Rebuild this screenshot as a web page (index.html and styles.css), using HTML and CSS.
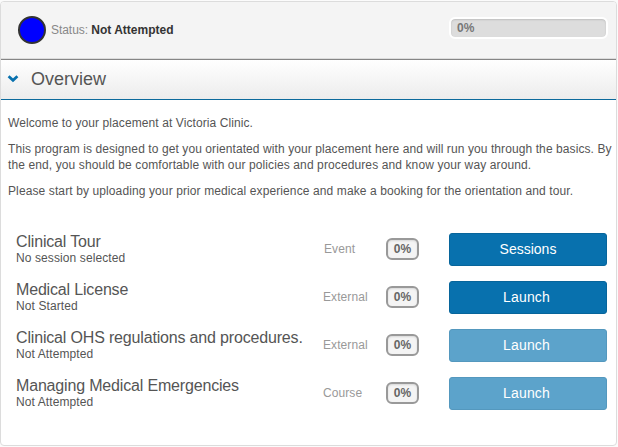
FILE: index.html
```html
<!DOCTYPE html>
<html lang="en">
<head>
<meta charset="utf-8">
<title>Overview</title>
<link rel="stylesheet" href="styles.css">
</head>
<body>
<main class="card">
  <header class="status-bar">
    <span class="status-dot"></span>
    <p class="status"><span class="status-label">Status: </span><strong>Not Attempted</strong></p>
    <div class="progress">0%</div>
  </header>
  <div class="section-head">
    <svg class="chevron" width="12" height="8" viewBox="0 0 12 8"><path d="M1.6 1.2 6 5.3l4.4-4.1" fill="none" stroke="#0871ae" stroke-width="2.7"/></svg>
    <h1>Overview</h1>
  </div>
  <section class="intro">
    <p>Welcome to your placement at Victoria Clinic.</p>
    <p>This program is designed to get you orientated with your placement here and will run you through the basics. By<br><span class="loose">the end, you should be comfortable with our policies and procedures and know your way around.</span></p>
    <p class="loose">Please start by uploading your prior medical experience and make a booking for the orientation and tour.</p>
  </section>
  <ul class="items">
    <li class="item">
      <div class="info"><h2>Clinical Tour</h2><p>No session selected</p></div>
      <span class="type event">Event</span><span class="badge">0%</span>
      <button class="btn">Sessions</button>
    </li>
    <li class="item">
      <div class="info"><h2>Medical License</h2><p>Not Started</p></div>
      <span class="type">External</span><span class="badge">0%</span>
      <button class="btn launch">Launch</button>
    </li>
    <li class="item">
      <div class="info"><h2>Clinical OHS regulations and procedures.</h2><p>Not Attempted</p></div>
      <span class="type">External</span><span class="badge">0%</span>
      <button class="btn launch" disabled>Launch</button>
    </li>
    <li class="item">
      <div class="info"><h2>Managing Medical Emergencies</h2><p>Not Attempted</p></div>
      <span class="type">Course</span><span class="badge">0%</span>
      <button class="btn launch" disabled>Launch</button>
    </li>
  </ul>
</main>
</body>
</html>
```
FILE: styles.css
```css
* { box-sizing: border-box; margin: 0; padding: 0; }
body {
  height: 447px;
  padding-top: 1px;
  background: #fbfbfb;
  font: 12px/16px "Liberation Sans", Arial, sans-serif;
  color: #555;
  overflow: hidden;
}
.card {
  width: 617px;
  height: 445px;
  border: 1px solid #dcdcdc;
  border-radius: 4px;
  background: #fff;
  overflow: hidden;
}
.status-bar {
  display: flex;
  align-items: center;
  height: 58px;
  padding: 0 8px 2px 17px;
  background: #f4f4f4;
  border-bottom: 1px solid #858585;
  box-shadow: inset 0 -1px #dcdcdc;
}
.status-dot {
  width: 28px;
  height: 28px;
  border: 2px solid #333;
  border-radius: 50%;
  background: #00f;
}
.status { flex: 1; margin-left: 5px; color: #333; white-space: nowrap; }
.status-label { color: #888; letter-spacing: -.05px; }
.progress {
  width: 159px;
  height: 22px;
  margin-top: -4px;
  padding-left: 6px;
  border: 2px solid #fff;
  border-radius: 6px;
  background: #ddd;
  background-clip: padding-box;
  box-shadow: inset 0 1px 2px rgba(0,0,0,.14);
  font-weight: bold;
  line-height: 18px;
  color: #777;
}
.section-head {
  display: flex;
  align-items: center;
  height: 40px;
  padding: 0 0 1px 6px;
  background: linear-gradient(#fff, #ececec);
  border-bottom: 1px solid #0c6a9c;
}
.chevron { flex: none; }
.section-head h1 { margin-left: 12px; font-size: 18px; font-weight: normal; line-height: 24px; }
.intro { padding: 15px 0 0 7px; white-space: nowrap; letter-spacing: .09px; }
.intro p { margin-bottom: 10px; }
.intro .loose { letter-spacing: .11px; }
.items { list-style: none; padding: 24px 9px 0 15px; }
.item {
  display: grid;
  grid-template-columns: 307px 63px 63px 158px;
  height: 48px;
  align-items: start;
}
.info { padding-top: 1px; }
.info h2 {
  font-size: 16px;
  font-weight: normal;
  line-height: 16px;
  letter-spacing: -.17px;
  white-space: nowrap;
}
.info p { line-height: 16px; letter-spacing: .1px; }
.type { padding-top: 8px; color: #999; letter-spacing: .08px; }
.event { padding-left: 1px; }
.badge {
  width: 33px;
  height: 22px;
  margin-top: 5px;
  border: 2px solid #999;
  border-radius: 6px;
  background: #f4f4f4;
  box-shadow: inset 0 1px 2px rgba(0,0,0,.12);
  font-weight: bold;
  line-height: 18px;
  text-align: center;
  color: #666;
}
.btn {
  height: 33px;
  padding-bottom: 2px;
  border: 1px solid #07659b;
  border-radius: 3px;
  background: #0871ae;
  color: #fff;
  font: 14px/16px "Liberation Sans", Arial, sans-serif;
}
.launch { padding-right: 3px; letter-spacing: .15px; }
.btn:disabled { border-color: #5498be; background: #5ca3cb; }
```
